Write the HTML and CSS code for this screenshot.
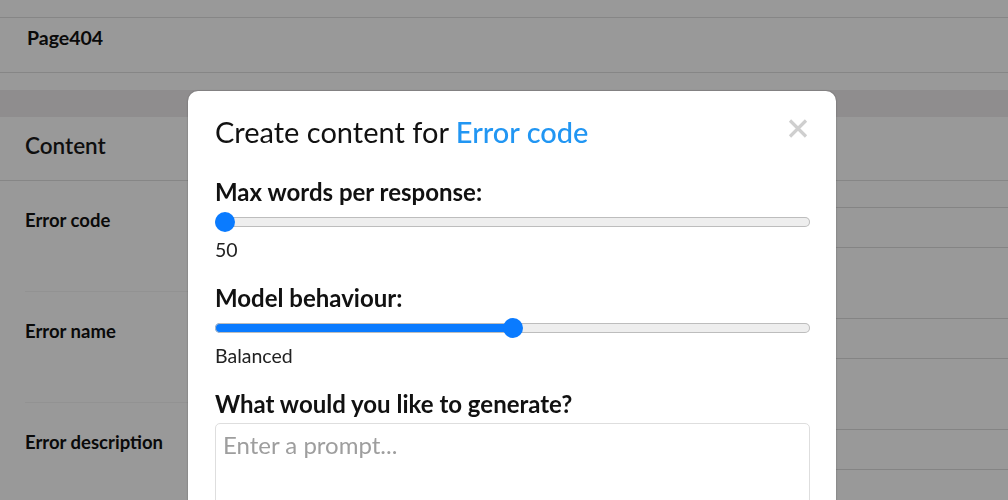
FILE: index.html
```html
<!DOCTYPE html>
<html lang="en">
<head>
<meta charset="utf-8">
<title>Page404 - Content</title>
<link rel="stylesheet" href="styles.css">
</head>
<body>
<div class="page">
  <div class="topbar"></div>
  <div class="crumb">Page404</div>
  <div class="spacer"></div>
  <div class="band"></div>
  <div class="section-head">Content</div>
  <div class="rows">
    <div class="row">
      <div class="label">Error code</div>
      <div class="field"><div class="box"></div></div>
    </div>
    <div class="row">
      <div class="label">Error name</div>
      <div class="field"><div class="box"></div></div>
    </div>
    <div class="row">
      <div class="label">Error description</div>
      <div class="field"><div class="box"></div></div>
    </div>
  </div>
</div>

<div class="overlay"></div>

<div class="modal">
  <div class="modal-head">
    <h2 class="title">Create content for <span class="accent">Error code</span></h2>
    <button class="close" aria-label="Close">
      <svg width="20" height="19" viewBox="0 0 20 19"><path d="M2 1.5 L18 17.5 M18 1.5 L2 17.5" stroke="#cfcfcf" stroke-width="3.2" stroke-linecap="butt"/></svg>
    </button>
  </div>
  <label class="flabel first">Max words per response:</label>
  <input class="range" type="range" min="50" max="500" value="50" style="--fill:0%">
  <div class="value">50</div>
  <label class="flabel">Model behaviour:</label>
  <input class="range" type="range" min="0" max="100" value="50" style="--fill:50%">
  <div class="value">Balanced</div>
  <label class="flabel">What would you like to generate?</label>
  <textarea class="prompt" placeholder="Enter a prompt..."></textarea>
</div>
</body>
</html>
```
FILE: styles.css
```css
html, body {
  margin: 0;
  padding: 0;
  height: 100%;
  overflow: hidden;
  background: #ffffff;
  font-family: Lato, "Noto Sans", "Liberation Sans", sans-serif;
  color: #111;
}

.page {
  display: flex;
  flex-direction: column;
}

.topbar {
  height: 17px;
  border-bottom: 1px solid #dfdfdf;
}

.crumb {
  height: 55px;
  border-bottom: 1px solid #dfdfdf;
  padding-left: 27px;
  box-sizing: border-box;
  font-size: 19.5px;
  font-weight: 700;
  line-height: 39px;
  color: #111;
}

.spacer {
  height: 17px;
}

.band {
  height: 27px;
  background: #efebed;
}

.section-head {
  height: 63px;
  border-bottom: 1px solid #e0e0e0;
  padding-left: 25px;
  font-size: 22.5px;
  font-weight: 600;
  line-height: 58px;
  color: #1a1a1a;
}

.rows {
  display: flex;
  flex-direction: column;
}

.row {
  display: grid;
  grid-template-columns: 225px 1fr;
  height: 111px;
}

.label {
  margin-left: 25px;
  border-bottom: 1px solid #f3f3f3;
  padding-top: 27px;
  font-size: 18.5px;
  font-weight: 700;
  line-height: 24px;
  color: #111;
}

.field {
  padding-top: 26px;
  padding-left: 20px;
  margin-right: -20px;
}

.box {
  height: 39px;
  border: 1px solid #dcdcdc;
  border-radius: 3px;
}

.overlay {
  position: fixed;
  inset: 0;
  background: rgba(0, 0, 0, 0.4);
}

.modal {
  position: fixed;
  left: 188px;
  top: 91px;
  width: 648px;
  height: 460px;
  box-sizing: border-box;
  padding: 24px 26px 0 27px;
  background: #fff;
  border-radius: 10px;
  box-shadow: 0 0 2px rgba(0, 0, 0, 0.35);
  display: flex;
  flex-direction: column;
}

.modal-head {
  display: flex;
  justify-content: space-between;
  align-items: flex-start;
}

.title {
  margin: 0;
  font-size: 29px;
  font-weight: 400;
  line-height: 34px;
  color: #111;
}

.accent {
  color: #2196f3;
  font-weight: 500;
}

.close {
  border: 0;
  background: none;
  padding: 0;
  margin: 4px 2px 0 0;
  width: 20px;
  height: 19px;
  cursor: pointer;
}

.close svg {
  display: block;
}

.flabel {
  display: block;
  margin-top: 23px;
  font-size: 24px;
  font-weight: 700;
  line-height: 27px;
  color: #111;
}

.flabel.first {
  margin-top: 29px;
}

.range {
  -webkit-appearance: none;
  appearance: none;
  display: block;
  width: 100%;
  height: 20px;
  margin: 7px 0 0;
  padding: 0;
  background: transparent;
}

.range::-webkit-slider-runnable-track {
  height: 10px;
  border-radius: 5px;
  background: linear-gradient(to right, #0a7bff 0, #0a7bff var(--fill), #eeeeee var(--fill), #eeeeee 100%);
  box-shadow: inset 0 0 0 1px #bdbdbd;
}

.range::-webkit-slider-thumb {
  -webkit-appearance: none;
  appearance: none;
  width: 20px;
  height: 20px;
  border-radius: 50%;
  background: #0a7bff;
  border: 0;
  margin-top: -5px;
}

.value {
  margin-top: 7px;
  font-size: 19.5px;
  line-height: 22px;
  color: #222;
}

.prompt {
  display: block;
  margin-top: 6px;
  width: 100%;
  height: 120px;
  box-sizing: border-box;
  border: 1px solid #dedede;
  border-radius: 5px;
  padding: 7px 7px;
  font-family: Lato, "Noto Sans", "Liberation Sans", sans-serif;
  font-size: 24px;
  line-height: 27px;
  color: #111;
  resize: none;
  outline: none;
}

.prompt::placeholder {
  color: #9e9e9e;
}
```
